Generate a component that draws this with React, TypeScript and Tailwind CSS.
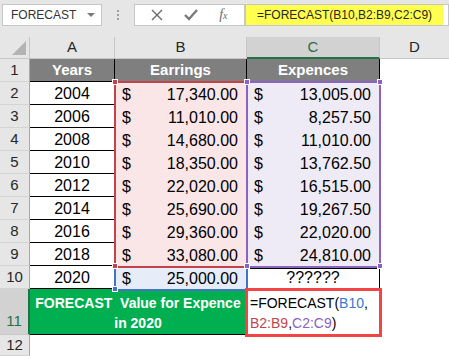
import React from "react";

const rows = [
  { n: 2, year: "2004", earn: "17,340.00", exp: "13,005.00" },
  { n: 3, year: "2006", earn: "11,010.00", exp: "8,257.50" },
  { n: 4, year: "2008", earn: "14,680.00", exp: "11,010.00" },
  { n: 5, year: "2010", earn: "18,350.00", exp: "13,762.50" },
  { n: 6, year: "2012", earn: "22,020.00", exp: "16,515.00" },
  { n: 7, year: "2014", earn: "25,690.00", exp: "19,267.50" },
  { n: 8, year: "2016", earn: "29,360.00", exp: "22,020.00" },
  { n: 9, year: "2018", earn: "33,080.00", exp: "24,810.00" },
];

const RowHead = ({ label, active }: { label: string; active?: boolean }) => (
  <div
    className={
      active
        ? "flex items-end justify-center pb-[2px] bg-[#d2d2d2] border-b border-[#c8c8c8] border-r-2 border-r-[#217346] text-[15px] text-[#217346]"
        : "flex items-center justify-center bg-[#e6e6e6] border-b border-[#d4d4d4] border-r border-r-[#a9a9a9] text-[15px] text-[#262626]"
    }
  >
    {label}
  </div>
);

const Money = ({ value }: { value: string }) => (
  <div className="flex items-center justify-between pl-[7px] pr-[8px] pt-[1px] border-b border-r border-black text-[16px] text-black">
    <span>$</span>
    <span>{value}</span>
  </div>
);

const Handle = ({ x, y, color }: { x: number; y: number; color: string }) => (
  <div
    className="absolute w-[6px] h-[6px] border border-white"
    style={{ left: x - 3, top: y - 3, background: color }}
  />
);

export default function App() {
  return (
    <div className="w-[449px] h-[356px] overflow-hidden bg-white font-['Liberation_Sans',Arial,sans-serif]">
      {/* Formula bar */}
      <div className="h-[37px] bg-[#e6e6e6] flex items-start pt-[4px]">
        <div className="ml-[2px] w-[100px] h-[22px] bg-white border border-[#c6c6c6] flex items-center justify-between pl-[8px] pr-[6px]">
          <span className="text-[12px] text-[#333]">FORECAST</span>
          <svg width="8" height="5" viewBox="0 0 8 5">
            <path d="M0 0 L8 0 L4 4 Z" fill="#7a7a7a" />
          </svg>
        </div>
        <div className="w-[32px] h-[22px] flex flex-col items-center justify-center gap-[2px]">
          <div className="w-[2px] h-[2px] bg-[#a0a0a0]" />
          <div className="w-[2px] h-[2px] bg-[#a0a0a0]" />
          <div className="w-[2px] h-[2px] bg-[#a0a0a0]" />
        </div>
        <div className="w-[111px] h-[22px] bg-white border border-[#c6c6c6] flex items-center justify-around px-[6px]">
          <svg width="12" height="12" viewBox="0 0 12 12">
            <path d="M1 1 L11 11 M11 1 L1 11" stroke="#6b6b6b" strokeWidth="1.4" />
          </svg>
          <svg width="14" height="12" viewBox="0 0 14 12">
            <path d="M1 6 L5 10 L13 1" stroke="#7a7a7a" strokeWidth="2.4" fill="none" />
          </svg>
          <span className="italic font-['Liberation_Serif',serif] text-[14px] text-[#6b6b6b] leading-none">
            f<span className="text-[10px]">x</span>
          </span>
        </div>
        <div className="w-[204px] h-[22px] bg-white border border-[#c6c6c6] flex">
          <div className="w-[197px] h-full bg-[#ffff50] flex items-center pl-[11px] text-[12px] text-[#262626]">
            =FORECAST(B10,B2:B9,C2:C9)
          </div>
        </div>
      </div>

      {/* Sheet */}
      <div className="relative grid grid-cols-[30px_85px_132px_133px_69px] grid-rows-[22px_repeat(10,23px)_46px_21px]">
        {/* column headers */}
        <div className="bg-[#e6e6e6] border-b border-r border-[#c6c6c6] flex items-end justify-end p-[2px]">
          <svg width="16" height="16" viewBox="0 0 16 16">
            <path d="M15 1 L15 15 L1 15 Z" fill="#b4b4b4" />
          </svg>
        </div>
        <div className="bg-[#e6e6e6] border-b border-r border-[#c6c6c6] flex items-center justify-center text-[15px] text-[#262626]">A</div>
        <div className="bg-[#e6e6e6] border-b border-r border-[#c6c6c6] flex items-center justify-center text-[15px] text-[#262626]">B</div>
        <div className="bg-[#d2d2d2] border-b-2 border-b-[#217346] border-r border-r-[#c6c6c6] flex items-center justify-center text-[15px] text-[#217346]">C</div>
        <div className="bg-[#e6e6e6] border-b border-[#c6c6c6] flex items-center justify-center text-[15px] text-[#262626]">D</div>

        {/* row 1 */}
        <RowHead label="1" />
        <div className="bg-[#7f7f7f] border-b border-r border-black flex items-center justify-center text-[15px] font-bold text-white">Years</div>
        <div className="bg-[#7f7f7f] border-b border-r border-black flex items-center justify-center text-[15px] font-bold text-white">Earrings</div>
        <div className="bg-[#7f7f7f] border-b border-r border-black flex items-center justify-center text-[15px] font-bold text-white">Expences</div>
        <div />

        {rows.map((r) => (
          <React.Fragment key={r.n}>
            <RowHead label={String(r.n)} />
            <div className="flex items-center justify-center pt-[1px] border-b border-r border-black text-[16px] text-black">{r.year}</div>
            <div className="bg-[#fbe6e7] grid">
              <Money value={r.earn} />
            </div>
            <div className="bg-[#efebf6] grid">
              <Money value={r.exp} />
            </div>
            <div />
          </React.Fragment>
        ))}

        {/* row 10 */}
        <RowHead label="10" />
        <div className="flex items-center justify-center pt-[1px] border-b border-r border-black text-[16px] text-black">2020</div>
        <div className="bg-[#e6edf8] grid">
          <Money value="25,000.00" />
        </div>
        <div className="flex items-center justify-center pt-[1px] border-b border-r border-black text-[16px] text-black">??????</div>
        <div />

        {/* row 11 */}
        <RowHead label="11" active />
        <div className="col-span-2 bg-[#00b050] border-b border-r border-black flex flex-col items-center justify-center pt-[2px] text-[14px] font-bold text-white leading-[20px]">
          <span className="whitespace-pre">FORECAST  Value for Expence</span>
          <span>in 2020</span>
        </div>
        <div className="bg-white flex flex-col justify-center pl-[3px] pt-[2px] text-[14px] text-black leading-[20px] whitespace-nowrap">
          <span>
            =FORECAST(<span className="text-[#3b78d4]">B10</span>,
          </span>
          <span>
            <span className="text-[#c0464c]">B2:B9</span>,<span className="text-[#8a62c2]">C2:C9</span>)
          </span>
        </div>
        <div />

        {/* row 12 */}
        <RowHead label="12" />
        <div />
        <div />
        <div />
        <div />

        {/* reference range outlines */}
        <div className="absolute left-[114px] top-[229px] w-[134px] h-[25px] border-2 border-[#4472c4]" />
        <div className="absolute left-[114px] top-[44px] w-[134px] h-[187px] border-2 border-[#c4424a]" />
        <div className="absolute left-[246px] top-[44px] w-[135px] h-[187px] border-2 border-[#8a64c0]" />
        <Handle x={115} y={252} color="#4472c4" />
        <Handle x={115} y={45} color="#c4424a" />
        <Handle x={115} y={229} color="#c4424a" />
        <Handle x={247} y={45} color="#8a64c0" />
        <Handle x={380} y={45} color="#8a64c0" />
        <Handle x={247} y={229} color="#8a64c0" />
        <Handle x={380} y={229} color="#8a64c0" />

        {/* annotation box on C11 */}
        <div className="absolute left-[245px] top-[251px] w-[137px] h-[49px] border-[3px] border-[#f24444]" />
      </div>
    </div>
  );
}
